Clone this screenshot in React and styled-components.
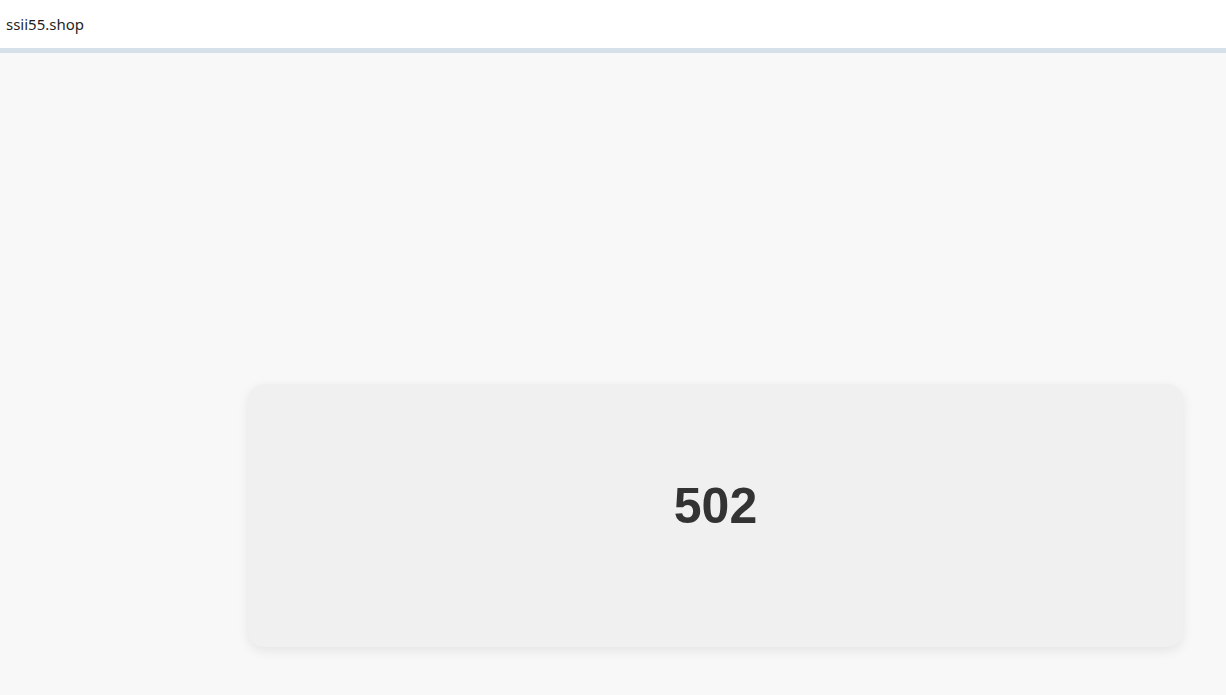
import React from "react";
import styled, { createGlobalStyle } from "styled-components";

const GlobalStyle = createGlobalStyle`
  html, body {
    margin: 0;
    padding: 0;
    background: #f8f8f8;
  }
  * {
    box-sizing: border-box;
  }
`;

const Page = styled.div`
  width: 100%;
  height: 100vh;
  display: flex;
  flex-direction: column;
  background: #f8f8f8;
  overflow: hidden;
`;

const Header = styled.header`
  height: 53px;
  flex-shrink: 0;
  display: flex;
  align-items: center;
  padding: 0 0 0 6px;
  background: #ffffff;
  border-bottom: 5px solid #d6e0e8;
`;

const SiteName = styled.div`
  font-family: "Noto Sans", "Open Sans", sans-serif;
  font-size: 15px;
  color: #1f1f1f;
`;

const Main = styled.main`
  flex: 1;
  display: flex;
  flex-direction: column;
  padding: 331px 43px 0 248px;
`;

const ErrorCard = styled.section`
  height: 263px;
  display: flex;
  align-items: center;
  justify-content: center;
  padding-bottom: 20px;
  background: #f0f0f0;
  border-radius: 16px;
  box-shadow: 0 4px 12px rgba(0, 0, 0, 0.08);
`;

const Code = styled.h1`
  margin: 0;
  font-family: "Liberation Sans", Arial, sans-serif;
  font-weight: 700;
  font-size: 50px;
  line-height: 1;
  color: #333333;
`;

const App = () => {
  return (
    <Page>
      <GlobalStyle />
      <Header>
        <SiteName>ssii55.shop</SiteName>
      </Header>
      <Main>
        <ErrorCard>
          <Code>502</Code>
        </ErrorCard>
      </Main>
    </Page>
  );
};

export default App;
